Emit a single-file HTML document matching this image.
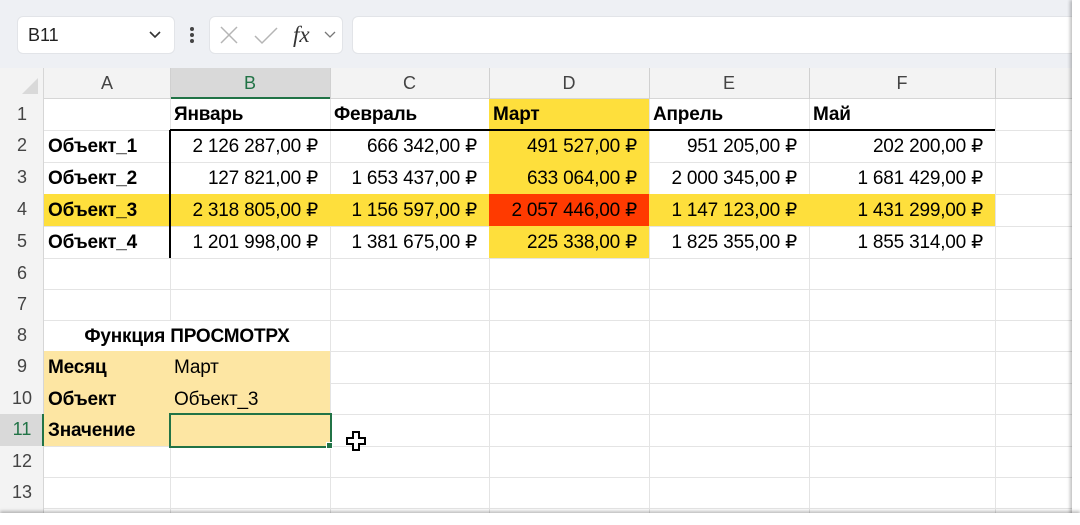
<!DOCTYPE html>
<html><head><meta charset="utf-8"><style>
*{margin:0;padding:0;box-sizing:border-box}
body{width:1080px;height:525px;background:#fff;position:relative;overflow:hidden;font-family:"Liberation Sans","DejaVu Sans",sans-serif;color:#000}
.a{position:absolute}
.c{position:absolute;font-size:19px;line-height:31px;white-space:nowrap;padding:0 4px;letter-spacing:-0.2px}
.r{text-align:right;padding-right:12px}
.b{font-weight:bold}
.hl{position:absolute;background:#e4e4e4;height:1px}
.vl{position:absolute;background:#e4e4e4;width:1px}
.rh{position:absolute;left:0;width:44px;text-align:center;font-size:18px;color:#444;line-height:31px}
.ch{position:absolute;top:68px;height:31px;line-height:31px;text-align:center;font-size:18px;color:#444}
</style></head><body>
<div class="a" style="left:0;top:0;width:1072px;height:68px;background:#eef0f4"></div>
<div class="a" style="left:17px;top:16px;width:158px;height:38px;background:#fff;border-radius:6px;border:1px solid #e2e4e8"></div>
<div class="a" style="left:28px;top:16px;line-height:38px;font-size:18px;color:#222">B11</div>
<svg class="a" style="left:148px;top:30px" width="14" height="10"><path d="M2 2 L7 7 L12 2" stroke="#333" stroke-width="1.6" fill="none"/></svg>
<div class="a" style="left:190px;top:27px;width:4px;height:4px;background:#444;border-radius:2px;box-shadow:0 6px 0 #444,0 12px 0 #444"></div>
<div class="a" style="left:209px;top:16px;width:134px;height:38px;background:#fff;border-radius:6px;border:1px solid #e2e4e8"></div>
<svg class="a" style="left:218px;top:25px" width="24" height="20"><path d="M3 2 L19 18 M19 2 L3 18" stroke="#b5b5b5" stroke-width="1.5"/></svg>
<svg class="a" style="left:253px;top:25px" width="26" height="20"><path d="M2 11 L9 18 L24 3" stroke="#b5b5b5" stroke-width="1.5" fill="none"/></svg>
<div class="a" style="left:293px;top:16px;line-height:38px;font-size:23px;font-style:italic;font-family:'Liberation Serif',serif;color:#333">fx</div>
<svg class="a" style="left:323px;top:30px" width="14" height="10"><path d="M2 2 L7 7 L12 2" stroke="#777" stroke-width="1.3" fill="none"/></svg>
<div class="a" style="left:352px;top:16px;width:720px;height:38px;background:#fff;border-radius:6px 0 0 6px;border:1px solid #e2e4e8;border-right:none"></div>
<div class="a" style="left:0;top:68px;width:1072px;height:31px;background:#f3f3f3;border-bottom:1px solid #d6d6d6"></div>
<div class="a" style="left:0;top:68px;width:44px;height:445px;background:#f3f3f3;border-right:1px solid #d6d6d6"></div>
<svg class="a" style="left:20px;top:76px" width="20" height="20"><path d="M18 2 L18 18 L2 18 Z" fill="#d9d9d9"/></svg>
<div class="a" style="left:170px;top:68px;width:160px;height:31px;background:#d9d9d9;border-bottom:2px solid #217346"></div>
<div class="a" style="left:0;top:414px;width:44px;height:32px;background:#d9d9d9;border-right:2px solid #217346"></div>
<div class="ch" style="left:44px;width:126px">A</div>
<div class="ch" style="left:170px;width:160px;color:#217346">B</div>
<div class="ch" style="left:330px;width:159px">C</div>
<div class="ch" style="left:489px;width:160px">D</div>
<div class="ch" style="left:649px;width:160px">E</div>
<div class="ch" style="left:809px;width:186px">F</div>
<div class="vl" style="left:170px;top:68px;height:31px;background:#d0d0d0"></div>
<div class="vl" style="left:330px;top:68px;height:31px;background:#d0d0d0"></div>
<div class="vl" style="left:489px;top:68px;height:31px;background:#d0d0d0"></div>
<div class="vl" style="left:649px;top:68px;height:31px;background:#d0d0d0"></div>
<div class="vl" style="left:809px;top:68px;height:31px;background:#d0d0d0"></div>
<div class="vl" style="left:995px;top:68px;height:31px;background:#d0d0d0"></div>
<!-- gridlines -->
<div class="hl" style="left:44px;top:130px;width:1028px"></div>
<div class="hl" style="left:44px;top:162px;width:1028px"></div>
<div class="hl" style="left:44px;top:194px;width:1028px"></div>
<div class="hl" style="left:44px;top:226px;width:1028px"></div>
<div class="hl" style="left:44px;top:258px;width:1028px"></div>
<div class="hl" style="left:44px;top:289px;width:1028px"></div>
<div class="hl" style="left:44px;top:320px;width:1028px"></div>
<div class="hl" style="left:44px;top:351px;width:1028px"></div>
<div class="hl" style="left:44px;top:383px;width:1028px"></div>
<div class="hl" style="left:44px;top:414px;width:1028px"></div>
<div class="hl" style="left:44px;top:446px;width:1028px"></div>
<div class="hl" style="left:44px;top:477px;width:1028px"></div>
<div class="hl" style="left:44px;top:508px;width:1028px"></div>
<div class="vl" style="left:170px;top:99px;height:414px"></div>
<div class="vl" style="left:330px;top:99px;height:414px"></div>
<div class="vl" style="left:489px;top:99px;height:414px"></div>
<div class="vl" style="left:649px;top:99px;height:414px"></div>
<div class="vl" style="left:809px;top:99px;height:414px"></div>
<div class="vl" style="left:995px;top:99px;height:414px"></div>
<!-- fills (cover gridlines) -->
<div class="a" style="left:489px;top:99px;width:160px;height:159px;background:#fedf3c"></div>
<div class="a" style="left:44px;top:194px;width:951px;height:32px;background:#fedf3c"></div>
<div class="a" style="left:489px;top:194px;width:160px;height:32px;background:#ff3a00"></div>
<div class="a" style="left:44px;top:321px;width:286px;height:30px;background:#fff"></div>
<div class="a" style="left:44px;top:351px;width:286px;height:95px;background:#fde6a3"></div>
<!-- table borders -->
<div class="a" style="left:170px;top:129px;width:825px;height:2px;background:#000"></div>
<div class="a" style="left:169px;top:130px;width:2px;height:128px;background:#000"></div>
<!-- row numbers -->
<div class="rh" style="top:99px">1</div><div class="rh" style="top:130px">2</div><div class="rh" style="top:162px">3</div><div class="rh" style="top:194px">4</div><div class="rh" style="top:226px">5</div><div class="rh" style="top:258px">6</div><div class="rh" style="top:289px">7</div><div class="rh" style="top:320px">8</div><div class="rh" style="top:351px">9</div><div class="rh" style="top:383px">10</div><div class="rh" style="top:414px;color:#217346">11</div><div class="rh" style="top:446px">12</div><div class="rh" style="top:477px">13</div>
<div class="c b" style="left:170px;top:99px">Январь</div>
<div class="c b" style="left:330px;top:99px">Февраль</div>
<div class="c b" style="left:489px;top:99px">Март</div>
<div class="c b" style="left:649px;top:99px">Апрель</div>
<div class="c b" style="left:809px;top:99px">Май</div>
<div class="c b" style="left:44px;top:131px">Объект_1</div>
<div class="c r" style="left:170px;top:131px;width:160px">2 126 287,00 ₽</div>
<div class="c r" style="left:330px;top:131px;width:159px">666 342,00 ₽</div>
<div class="c r" style="left:489px;top:131px;width:160px">491 527,00 ₽</div>
<div class="c r" style="left:649px;top:131px;width:160px">951 205,00 ₽</div>
<div class="c r" style="left:809px;top:131px;width:186px">202 200,00 ₽</div>
<div class="c b" style="left:44px;top:163px">Объект_2</div>
<div class="c r" style="left:170px;top:163px;width:160px">127 821,00 ₽</div>
<div class="c r" style="left:330px;top:163px;width:159px">1 653 437,00 ₽</div>
<div class="c r" style="left:489px;top:163px;width:160px">633 064,00 ₽</div>
<div class="c r" style="left:649px;top:163px;width:160px">2 000 345,00 ₽</div>
<div class="c r" style="left:809px;top:163px;width:186px">1 681 429,00 ₽</div>
<div class="c b" style="left:44px;top:195px">Объект_3</div>
<div class="c r" style="left:170px;top:195px;width:160px">2 318 805,00 ₽</div>
<div class="c r" style="left:330px;top:195px;width:159px">1 156 597,00 ₽</div>
<div class="c r" style="left:489px;top:195px;width:160px">2 057 446,00 ₽</div>
<div class="c r" style="left:649px;top:195px;width:160px">1 147 123,00 ₽</div>
<div class="c r" style="left:809px;top:195px;width:186px">1 431 299,00 ₽</div>
<div class="c b" style="left:44px;top:227px">Объект_4</div>
<div class="c r" style="left:170px;top:227px;width:160px">1 201 998,00 ₽</div>
<div class="c r" style="left:330px;top:227px;width:159px">1 381 675,00 ₽</div>
<div class="c r" style="left:489px;top:227px;width:160px">225 338,00 ₽</div>
<div class="c r" style="left:649px;top:227px;width:160px">1 825 355,00 ₽</div>
<div class="c r" style="left:809px;top:227px;width:186px">1 855 314,00 ₽</div>
<div class="c b" style="left:44px;top:321px;width:286px;text-align:center">Функция ПРОСМОТРХ</div>
<div class="c b" style="left:44px;top:352px">Месяц</div>
<div class="c" style="left:170px;top:352px">Март</div>
<div class="c b" style="left:44px;top:384px">Объект</div>
<div class="c" style="left:170px;top:384px">Объект_3</div>
<div class="c b" style="left:44px;top:415px">Значение</div>
<div class="a" style="left:169px;top:413px;width:163px;height:35px;border:2px solid #217346"></div>
<div class="a" style="left:326px;top:442px;width:7px;height:7px;background:#217346;border:1px solid #fff"></div>
<svg class="a" style="left:345px;top:430px" width="24" height="24"><path d="M8 2 H14 V8 H20 V14 H14 V20 H8 V14 H2 V8 H8 Z" fill="#fff" stroke="#000" stroke-width="2"/></svg>
<div class="a" style="left:1072px;top:0;width:8px;height:525px;background:#fff;box-shadow:-2px 0 3px rgba(0,0,0,.25)"></div>
<div class="a" style="left:0;top:513px;width:1080px;height:12px;background:#fff;box-shadow:0 -2px 3px rgba(0,0,0,.25)"></div>
</body></html>
